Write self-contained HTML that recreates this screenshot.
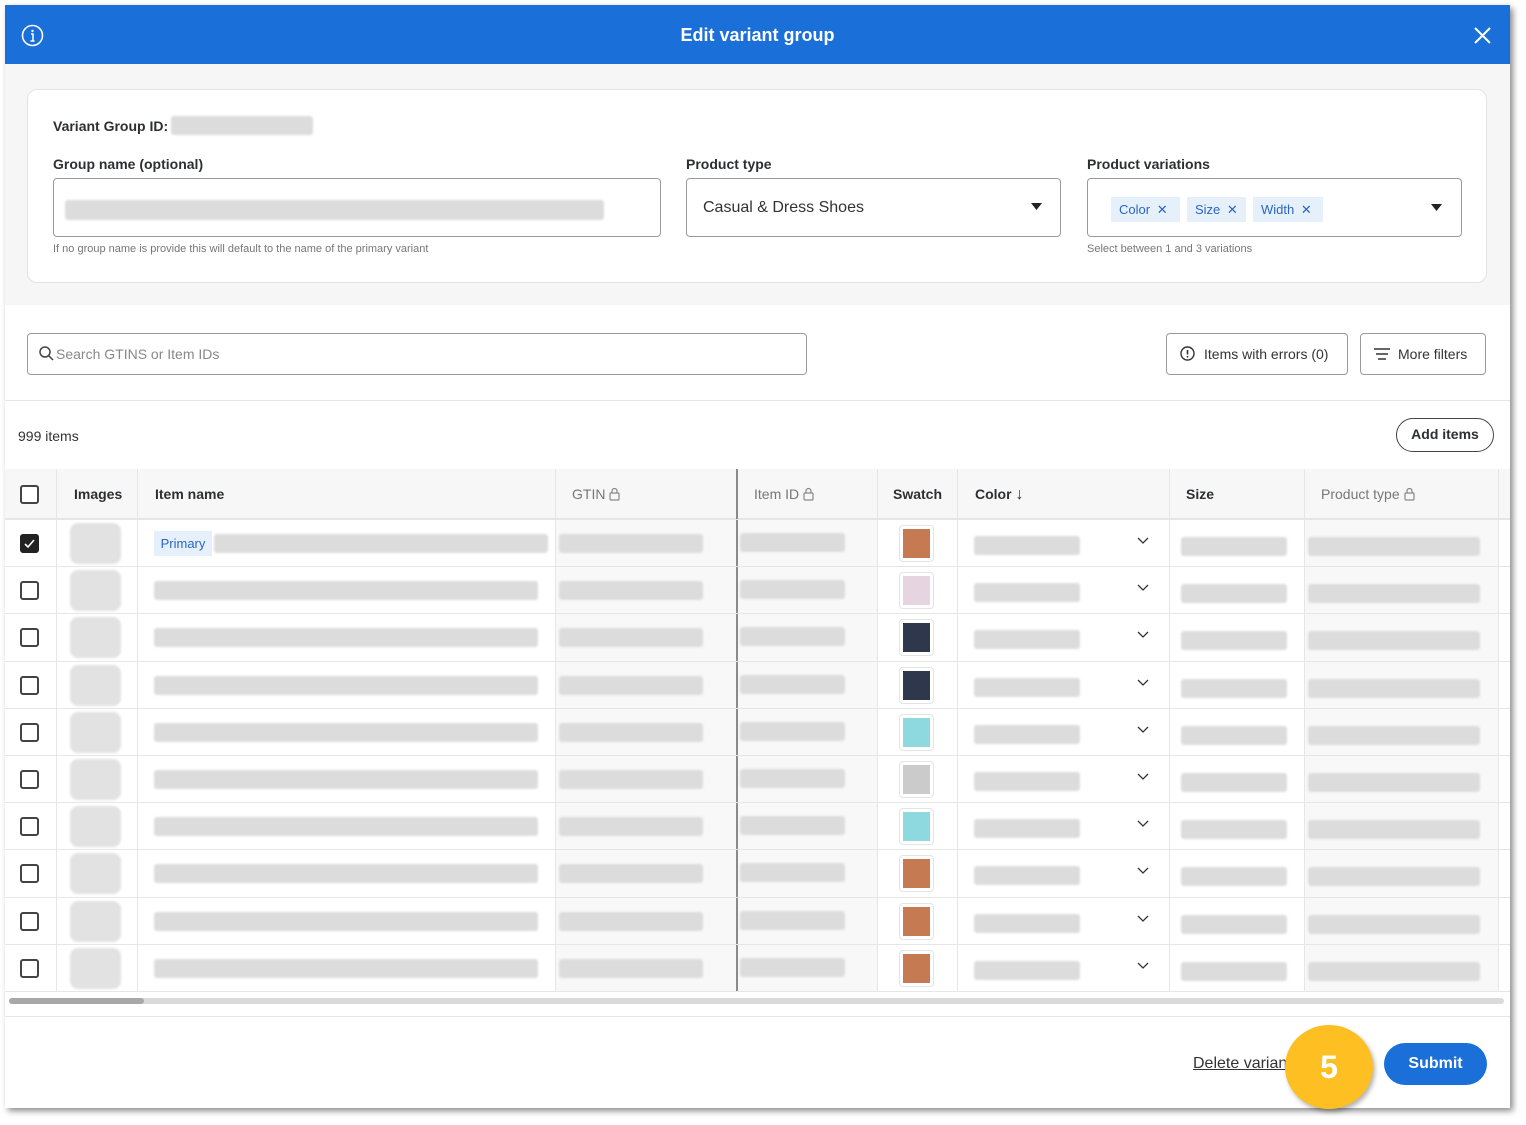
<!DOCTYPE html>
<html><head><meta charset="utf-8"><style>
*{box-sizing:border-box;margin:0;padding:0}
body{width:1526px;height:1125px;background:#fff;font-family:"Liberation Sans",sans-serif;position:relative;overflow:hidden;color:#2e2f32}
.a{position:absolute}
.modal{left:5px;top:5px;width:1505px;height:1103px;background:#fff;box-shadow:3px 3px 6px rgba(0,0,0,.45);overflow:hidden}
.hdr{left:0;top:0;width:1505px;height:59px;background:#1a6fd8;color:#fff}
.lbl{font-size:14px;font-weight:bold;color:#2e2f32}
.help{font-size:11px;color:#777}
.bar{position:absolute;background:#dcdcdc;border-radius:3px;filter:blur(1px);height:19px}
.box{border:1.5px solid #9a9a9a;border-radius:4px;background:#fff}
.chip{position:absolute;top:18px;height:25px;background:#e6f0fb;color:#2a66c0;font-size:13px;line-height:25px;padding-left:8px}
.th{position:absolute;top:0;height:50px;line-height:50px;font-size:14px;font-weight:bold;color:#2e2f32}
.thg{color:#777;font-weight:normal}
.th svg{vertical-align:-2px;margin-left:4px}
.row{position:absolute;left:0;width:1505px;height:47px;border-top:1px solid #e6e6e6}
.cb{position:absolute;left:15px;top:14px;width:19px;height:19px;border:2px solid #444;border-radius:3px;background:#fff}
.img{position:absolute;left:65px;top:3px;width:51px;height:41px;background:#e2e2e2;border-radius:8px;filter:blur(1px)}
.sw{position:absolute;left:894px;top:5px;width:35px;height:37px;border:1px solid #e4e4e4;border-radius:4px;background:#fff}
.sw i{position:absolute;left:3px;top:3px;width:27px;height:29px;display:block}
.chev{position:absolute;left:1132px;top:14px;width:12px;height:12px}
</style></head><body>
<div class="a modal">
 <div class="a hdr">
  <svg class="a" style="left:16px;top:19px" width="23" height="23" viewBox="0 0 23 23"><circle cx="11.5" cy="11.5" r="10" fill="none" stroke="#fff" stroke-width="1.6"/><circle cx="11.5" cy="7" r="1.2" fill="#fff"/><path d="M10 10h2v7M9.5 17h4" stroke="#fff" stroke-width="1.5" fill="none"/></svg>
  <div class="a" style="left:0;width:1505px;top:20px;text-align:center;font-size:18px;font-weight:bold">Edit variant group</div>
  <svg class="a" style="left:1469px;top:22px" width="17" height="17" viewBox="0 0 17 17"><path d="M1 1L16 16M16 1L1 16" stroke="#fff" stroke-width="2"/></svg>
 </div>
 <div class="a" style="left:0;top:59px;width:1505px;height:241px;background:#f6f6f6"></div>
 <div class="a" style="left:22px;top:84px;width:1460px;height:194px;background:#fff;border:1px solid #e3e3e3;border-radius:10px"></div>
 <div class="a lbl" style="left:48px;top:113px">Variant Group ID:</div>
 <div class="bar" style="left:166px;top:111px;width:142px;height:19px"></div>
 <div class="a lbl" style="left:48px;top:151px">Group name (optional)</div>
 <div class="a box" style="left:48px;top:173px;width:608px;height:59px"></div>
 <div class="bar" style="left:60px;top:195px;width:539px;height:20px"></div>
 <div class="a help" style="left:48px;top:238px">If no group name is provide this will default to the name of the primary variant</div>
 <div class="a lbl" style="left:681px;top:151px">Product type</div>
 <div class="a box" style="left:681px;top:173px;width:375px;height:59px"></div>
 <div class="a" style="left:698px;top:194px;font-size:16px;color:#333">Casual &amp; Dress Shoes</div>
 <svg class="a" style="left:1026px;top:198px" width="11" height="7"><path d="M0 0h11L5.5 7z" fill="#222"/></svg>
 <div class="a lbl" style="left:1082px;top:151px">Product variations</div>
 <div class="a box" style="left:1082px;top:173px;width:375px;height:59px">
  <div class="chip" style="left:23px;width:69px">Color <span style="margin-left:3px">✕</span></div>
  <div class="chip" style="left:99px;width:59px">Size <span style="margin-left:3px">✕</span></div>
  <div class="chip" style="left:165px;width:70px">Width <span style="margin-left:3px">✕</span></div>
  <svg class="a" style="left:343px;top:25px" width="11" height="7"><path d="M0 0h11L5.5 7z" fill="#222"/></svg>
 </div>
 <div class="a help" style="left:1082px;top:238px">Select between 1 and 3 variations</div>

 <div class="a box" style="left:22px;top:328px;width:780px;height:42px"></div>
 <svg class="a" style="left:34px;top:341px" width="15" height="15"><circle cx="6" cy="6" r="5" fill="none" stroke="#444" stroke-width="1.5"/><path d="M9.5 9.5L14 14" stroke="#444" stroke-width="1.5"/></svg>
 <div class="a" style="left:51px;top:341px;font-size:14px;color:#888">Search GTINS or Item IDs</div>
 <div class="a box" style="left:1161px;top:328px;width:182px;height:42px"></div>
 <svg class="a" style="left:1175px;top:341px" width="15" height="15"><circle cx="7.5" cy="7.5" r="6.5" fill="none" stroke="#333" stroke-width="1.4"/><path d="M7.5 4v4.5" stroke="#333" stroke-width="1.6"/><circle cx="7.5" cy="10.8" r=".9" fill="#333"/></svg>
 <div class="a" style="left:1199px;top:341px;font-size:14px;color:#333">Items with errors (0)</div>
 <div class="a box" style="left:1355px;top:328px;width:126px;height:42px"></div>
 <svg class="a" style="left:1369px;top:343px" width="16" height="12"><path d="M0 1h16M2 6h12M4 11h8" stroke="#333" stroke-width="1.4"/></svg>
 <div class="a" style="left:1393px;top:341px;font-size:14px;color:#333">More filters</div>
 <div class="a" style="left:0;top:395px;width:1505px;height:1px;background:#e6e6e6"></div>
 <div class="a" style="left:13px;top:423px;font-size:14px;color:#333">999 items</div>
 <div class="a" style="left:1391px;top:413px;width:98px;height:34px;border:1.5px solid #444;border-radius:17px;text-align:center;line-height:31px;font-size:14px;font-weight:bold">Add items</div>

 <div class="a" style="left:0;top:464px;width:1505px;height:523px">
  <div class="a" style="left:0;top:0;width:1505px;height:50px;background:#f7f7f7;border-bottom:1px solid #e6e6e6"></div>
  <div class="a" style="left:550px;top:50px;width:182px;height:473px;background:#f8f8f8"></div>
  <div class="a" style="left:732px;top:50px;width:140px;height:473px;background:#f8f8f8"></div>
  <div class="a" style="left:1299px;top:50px;width:194px;height:473px;background:#f8f8f8"></div>
  <div class="a" style="left:51px;top:0;width:1px;height:523px;background:#e6e6e6"></div>
  <div class="a" style="left:132px;top:0;width:1px;height:523px;background:#e6e6e6"></div>
  <div class="a" style="left:550px;top:0;width:1px;height:523px;background:#e6e6e6"></div>
  <div class="a" style="left:731px;top:0;width:2px;height:523px;background:#8a8a8a"></div>
  <div class="a" style="left:872px;top:0;width:1px;height:523px;background:#e6e6e6"></div>
  <div class="a" style="left:952px;top:0;width:1px;height:523px;background:#e6e6e6"></div>
  <div class="a" style="left:1164px;top:0;width:1px;height:523px;background:#e6e6e6"></div>
  <div class="a" style="left:1299px;top:0;width:1px;height:523px;background:#e6e6e6"></div>
  <div class="a" style="left:1493px;top:0;width:1px;height:523px;background:#e6e6e6"></div>
  <div class="cb" style="top:16px"></div>
  <div class="th" style="left:69px">Images</div>
  <div class="th" style="left:150px">Item name</div>
  <div class="th thg" style="left:567px">GTIN<svg width="11" height="14" viewBox="0 0 11 14"><path d="M3 6V4a2.5 2.5 0 015 0v2" fill="none" stroke="#888" stroke-width="1.2"/><rect x="1" y="6" width="9" height="7" rx="1" fill="none" stroke="#888" stroke-width="1.2"/></svg></div>
  <div class="th thg" style="left:749px">Item ID<svg width="11" height="14" viewBox="0 0 11 14"><path d="M3 6V4a2.5 2.5 0 015 0v2" fill="none" stroke="#888" stroke-width="1.2"/><rect x="1" y="6" width="9" height="7" rx="1" fill="none" stroke="#888" stroke-width="1.2"/></svg></div>
  <div class="th" style="left:888px">Swatch</div>
  <div class="th" style="left:970px">Color <span style="font-weight:normal;font-size:16px">↓</span></div>
  <div class="th" style="left:1181px">Size</div>
  <div class="th thg" style="left:1316px">Product type<svg width="11" height="14" viewBox="0 0 11 14"><path d="M3 6V4a2.5 2.5 0 015 0v2" fill="none" stroke="#888" stroke-width="1.2"/><rect x="1" y="6" width="9" height="7" rx="1" fill="none" stroke="#888" stroke-width="1.2"/></svg></div>

  <div class="row" style="top:50px"><div class="cb" style="background:#222;border-color:#222"><svg width="15" height="15" viewBox="0 0 15 15" style="display:block"><path d="M3 8l3 3 6-7" fill="none" stroke="#fff" stroke-width="1.6"/></svg></div><div class="img"></div><div class="a" style="left:149px;top:11px;width:58px;height:25px;background:#e6f0fb;color:#2a66c0;font-size:13px;line-height:25px;text-align:center">Primary</div><div class="bar" style="left:209px;top:14px;width:334px"></div><div class="bar" style="left:554px;top:14px;width:144px"></div><div class="bar" style="left:735px;top:13px;width:105px"></div><div class="sw"><i style="background:#c67a52"></i></div><div class="bar" style="left:969px;top:16px;width:106px"></div><svg class="chev" viewBox="0 0 12 12"><path d="M1 4l5 5 5-5" fill="none" stroke="#333" stroke-width="1.3"/></svg><div class="bar" style="left:1176px;top:17px;width:106px"></div><div class="bar" style="left:1303px;top:17px;width:172px"></div></div>

  <div class="row" style="top:97px"><div class="cb"></div><div class="img"></div><div class="bar" style="left:149px;top:14px;width:384px"></div><div class="bar" style="left:554px;top:14px;width:144px"></div><div class="bar" style="left:735px;top:13px;width:105px"></div><div class="sw"><i style="background:#e6d5e0"></i></div><div class="bar" style="left:969px;top:16px;width:106px"></div><svg class="chev" viewBox="0 0 12 12"><path d="M1 4l5 5 5-5" fill="none" stroke="#333" stroke-width="1.3"/></svg><div class="bar" style="left:1176px;top:17px;width:106px"></div><div class="bar" style="left:1303px;top:17px;width:172px"></div></div>

  <div class="row" style="top:144px"><div class="cb"></div><div class="img"></div><div class="bar" style="left:149px;top:14px;width:384px"></div><div class="bar" style="left:554px;top:14px;width:144px"></div><div class="bar" style="left:735px;top:13px;width:105px"></div><div class="sw"><i style="background:#2f374c"></i></div><div class="bar" style="left:969px;top:16px;width:106px"></div><svg class="chev" viewBox="0 0 12 12"><path d="M1 4l5 5 5-5" fill="none" stroke="#333" stroke-width="1.3"/></svg><div class="bar" style="left:1176px;top:17px;width:106px"></div><div class="bar" style="left:1303px;top:17px;width:172px"></div></div>

  <div class="row" style="top:192px"><div class="cb"></div><div class="img"></div><div class="bar" style="left:149px;top:14px;width:384px"></div><div class="bar" style="left:554px;top:14px;width:144px"></div><div class="bar" style="left:735px;top:13px;width:105px"></div><div class="sw"><i style="background:#2f374c"></i></div><div class="bar" style="left:969px;top:16px;width:106px"></div><svg class="chev" viewBox="0 0 12 12"><path d="M1 4l5 5 5-5" fill="none" stroke="#333" stroke-width="1.3"/></svg><div class="bar" style="left:1176px;top:17px;width:106px"></div><div class="bar" style="left:1303px;top:17px;width:172px"></div></div>

  <div class="row" style="top:239px"><div class="cb"></div><div class="img"></div><div class="bar" style="left:149px;top:14px;width:384px"></div><div class="bar" style="left:554px;top:14px;width:144px"></div><div class="bar" style="left:735px;top:13px;width:105px"></div><div class="sw"><i style="background:#8dd9df"></i></div><div class="bar" style="left:969px;top:16px;width:106px"></div><svg class="chev" viewBox="0 0 12 12"><path d="M1 4l5 5 5-5" fill="none" stroke="#333" stroke-width="1.3"/></svg><div class="bar" style="left:1176px;top:17px;width:106px"></div><div class="bar" style="left:1303px;top:17px;width:172px"></div></div>

  <div class="row" style="top:286px"><div class="cb"></div><div class="img"></div><div class="bar" style="left:149px;top:14px;width:384px"></div><div class="bar" style="left:554px;top:14px;width:144px"></div><div class="bar" style="left:735px;top:13px;width:105px"></div><div class="sw"><i style="background:#cbcbcb"></i></div><div class="bar" style="left:969px;top:16px;width:106px"></div><svg class="chev" viewBox="0 0 12 12"><path d="M1 4l5 5 5-5" fill="none" stroke="#333" stroke-width="1.3"/></svg><div class="bar" style="left:1176px;top:17px;width:106px"></div><div class="bar" style="left:1303px;top:17px;width:172px"></div></div>

  <div class="row" style="top:333px"><div class="cb"></div><div class="img"></div><div class="bar" style="left:149px;top:14px;width:384px"></div><div class="bar" style="left:554px;top:14px;width:144px"></div><div class="bar" style="left:735px;top:13px;width:105px"></div><div class="sw"><i style="background:#8dd9df"></i></div><div class="bar" style="left:969px;top:16px;width:106px"></div><svg class="chev" viewBox="0 0 12 12"><path d="M1 4l5 5 5-5" fill="none" stroke="#333" stroke-width="1.3"/></svg><div class="bar" style="left:1176px;top:17px;width:106px"></div><div class="bar" style="left:1303px;top:17px;width:172px"></div></div>

  <div class="row" style="top:380px"><div class="cb"></div><div class="img"></div><div class="bar" style="left:149px;top:14px;width:384px"></div><div class="bar" style="left:554px;top:14px;width:144px"></div><div class="bar" style="left:735px;top:13px;width:105px"></div><div class="sw"><i style="background:#c67a52"></i></div><div class="bar" style="left:969px;top:16px;width:106px"></div><svg class="chev" viewBox="0 0 12 12"><path d="M1 4l5 5 5-5" fill="none" stroke="#333" stroke-width="1.3"/></svg><div class="bar" style="left:1176px;top:17px;width:106px"></div><div class="bar" style="left:1303px;top:17px;width:172px"></div></div>

  <div class="row" style="top:428px"><div class="cb"></div><div class="img"></div><div class="bar" style="left:149px;top:14px;width:384px"></div><div class="bar" style="left:554px;top:14px;width:144px"></div><div class="bar" style="left:735px;top:13px;width:105px"></div><div class="sw"><i style="background:#c67a52"></i></div><div class="bar" style="left:969px;top:16px;width:106px"></div><svg class="chev" viewBox="0 0 12 12"><path d="M1 4l5 5 5-5" fill="none" stroke="#333" stroke-width="1.3"/></svg><div class="bar" style="left:1176px;top:17px;width:106px"></div><div class="bar" style="left:1303px;top:17px;width:172px"></div></div>

  <div class="row" style="top:475px;border-bottom:1px solid #e6e6e6;height:48px"><div class="cb"></div><div class="img"></div><div class="bar" style="left:149px;top:14px;width:384px"></div><div class="bar" style="left:554px;top:14px;width:144px"></div><div class="bar" style="left:735px;top:13px;width:105px"></div><div class="sw"><i style="background:#c67a52"></i></div><div class="bar" style="left:969px;top:16px;width:106px"></div><svg class="chev" viewBox="0 0 12 12"><path d="M1 4l5 5 5-5" fill="none" stroke="#333" stroke-width="1.3"/></svg><div class="bar" style="left:1176px;top:17px;width:106px"></div><div class="bar" style="left:1303px;top:17px;width:172px"></div></div>
 </div>

 <div class="a" style="left:4px;top:993px;width:1495px;height:6px;background:#dadada;border-radius:3px"></div>
 <div class="a" style="left:4px;top:993px;width:135px;height:6px;background:#a8a8a8;border-radius:3px"></div>
 <div class="a" style="left:0;top:1011px;width:1505px;height:1px;background:#e6e6e6"></div>
 <div class="a" style="left:1188px;top:1050px;font-size:16px;color:#333;text-decoration:underline">Delete variant group</div>
 <div class="a" style="left:1379px;top:1038px;width:103px;height:42px;background:#1a6fd8;border-radius:21px;color:#fff;font-size:16px;font-weight:bold;text-align:center;line-height:42px">Submit</div>
</div>
<div class="a" style="left:1285px;top:1025px;width:88px;height:84px;border-radius:50%;background:#fdbf22;box-shadow:2px 3px 5px rgba(0,0,0,.3);color:#fff;font-size:32px;font-weight:bold;text-align:center;line-height:84px">5</div>
</body></html>
